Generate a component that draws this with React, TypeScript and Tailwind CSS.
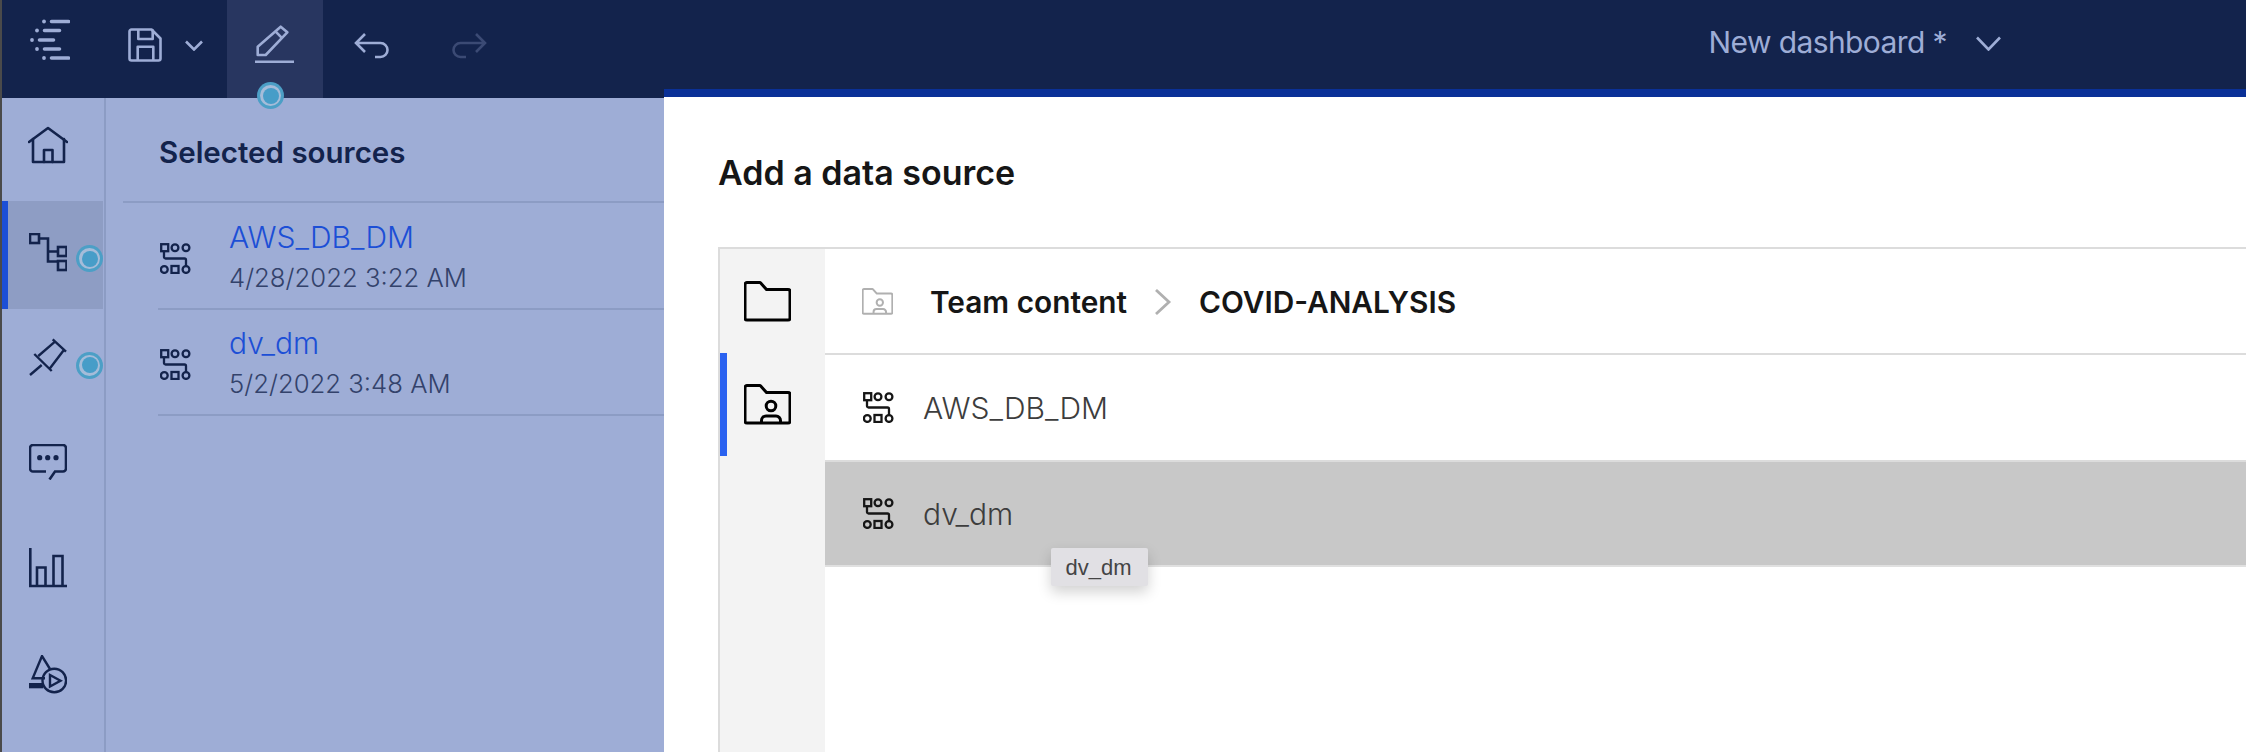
import React from "react";

const font = { fontFamily: '"Inter", "Liberation Sans", sans-serif' };

function DataSourceIcon({ className = "" }: { className?: string }) {
  return (
    <svg width="31" height="31" viewBox="0 0 31 31" fill="none" stroke="currentColor" strokeWidth="2.3" className={className}>
      <rect x="1.2" y="1.2" width="7" height="7" />
      <circle cx="15" cy="4.7" r="3.4" />
      <circle cx="26" cy="4.7" r="3.4" />
      <path d="M4 8V14a1.5 1.5 0 0 0 1.5 1.5H24.5a1.5 1.5 0 0 1 1.5 1.5V23" />
      <circle cx="4.3" cy="26.5" r="3.4" />
      <rect x="11.5" y="23" width="7" height="7" />
      <circle cx="26" cy="26.5" r="3.4" />
    </svg>
  );
}

function FolderIcon({ person = false, size = 47, className = "" }: { person?: boolean; size?: number; className?: string }) {
  return (
    <svg width={size} height={(size * 41) / 47} viewBox="0 0 47 41" fill="none" stroke="currentColor" strokeWidth="3" strokeLinejoin="round" className={className}>
      <path d="M3 1.5H15.5a1.5 1.5 0 0 1 1.2 .5L22.5 8.5H44a2 2 0 0 1 2 2V37a2 2 0 0 1 -2 2H3a2 2 0 0 1 -2-2V3.5a2 2 0 0 1 2-2Z" />
      {person && (
        <>
          <circle cx="27" cy="22" r="4.8" />
          <path d="M17.5 39V36.5a4.5 4.5 0 0 1 4.5-4.5H32a4.5 4.5 0 0 1 4.5 4.5V39" />
        </>
      )}
    </svg>
  );
}

function Chevron({ w, h, className = "" }: { w: number; h: number; className?: string }) {
  return (
    <svg width={w} height={h} viewBox={`0 0 ${w} ${h}`} fill="none" stroke="currentColor" strokeWidth="2.6" className={className}>
      <path d={`M1 1.5L${w / 2} ${h - 1.5}L${w - 1} 1.5`} />
    </svg>
  );
}

function Dot({ className = "" }: { className?: string }) {
  return (
    <span className={`absolute flex h-[27px] w-[27px] items-center justify-center rounded-full bg-[#4c9fc6] ${className}`}>
      <span className="flex h-[21px] w-[21px] items-center justify-center rounded-full bg-[#a5bcd9]">
        <span className="h-[16px] w-[16px] rounded-full bg-[#479dc8]" />
      </span>
    </span>
  );
}

function RailItem({ children, h = "h-[106px]", pb = "pb-[10px]", active = false, dot = false }: { children: React.ReactNode; h?: string; pb?: string; active?: boolean; dot?: boolean }) {
  return (
    <div className={`relative flex w-[101px] items-center justify-center ${h} ${pb} ${active ? "border-l-[6px] border-[#1c4fd6] bg-[#8e9dc4] pr-[15px]" : "pr-[9px]"}`}>
      {children}
      {dot && <Dot className="top-1/2 right-[0px] -translate-y-[10px]" />}
    </div>
  );
}

const ink = "#13234c";

export default function App() {
  return (
    <div className="flex h-[752px] w-[2246px] flex-col overflow-hidden border-l-2 border-[#4a4a4a] bg-white" style={font}>
      <header className="flex h-[98px] shrink-0 items-start bg-[#13234c] text-[#9eadd6]">
        <div className="flex h-[98px] w-[96px] items-start justify-center pt-[19px]">
          <svg width="40" height="41" viewBox="0 0 40 41" fill="none" stroke="currentColor" strokeWidth="3.6" strokeLinecap="round">
            <path d="M21.5 2.5H38.5M14.5 11.5H29.5M9.5 21H23.5M14.5 30H29.5M21.5 39H38.5" />
            <g fill="currentColor" stroke="none">
              <circle cx="14" cy="2.5" r="1.9" />
              <circle cx="7" cy="11.5" r="1.9" />
              <circle cx="2" cy="21" r="1.9" />
              <circle cx="7" cy="30" r="1.9" />
              <circle cx="14" cy="39" r="1.9" />
            </g>
          </svg>
        </div>
        <div className="flex h-[98px] w-[129px] items-start pt-[28px] pl-[30px]">
          <svg width="34" height="34" viewBox="0 0 34 34" fill="none" stroke="currentColor" strokeWidth="2.6" strokeLinejoin="round">
            <path d="M3.5 1.5H23.5L32.5 10.5V30.5a2 2 0 0 1 -2 2H3.5a2 2 0 0 1 -2-2V3.5a2 2 0 0 1 2-2Z" />
            <path d="M10.3 1.5V11H24.7V1.5M9.7 32.5V18.7H25.3V32.5" />
          </svg>
          <Chevron w={18} h={11} className="mt-[12px] ml-[23px]" />
        </div>
        <div className="relative flex h-[98px] w-[96px] items-start justify-center bg-[#283660] pt-[25px]">
          <svg width="40" height="40" viewBox="0 0 40 40" fill="none" stroke="currentColor" strokeWidth="2.6" strokeLinejoin="round">
            <path d="M2.7 30V21.7L25.7 1.7L32.3 7.3L10.7 30Z" />
            <path d="M20.7 6.7L27.3 13.3" />
            <path d="M0 36.8H39" />
          </svg>
          <Dot className="top-[82px] left-[30px] z-10" />
        </div>
        <div className="flex h-[98px] w-[96px] items-start justify-center pt-[30px] pl-[2px]">
          <svg width="37" height="30" viewBox="0 0 37 30" fill="none" stroke="currentColor" strokeWidth="2.6">
            <path d="M11 4L2 13L11 22M2 13H26.5a7 7 0 0 1 0 14H21" />
          </svg>
        </div>
        <div className="flex h-[98px] w-[96px] items-start justify-center pt-[30px] pl-[2px] text-[#3b4a74]">
          <svg width="37" height="30" viewBox="0 0 37 30" fill="none" stroke="currentColor" strokeWidth="2.6">
            <path d="M26 4L35 13L26 22M35 13H10.5a7 7 0 0 0 0 14H16" />
          </svg>
        </div>
        <div className="mr-[245px] ml-auto flex items-center pt-[25px]">
          <span className="text-[30px] leading-[34px] tracking-[-0.6px]">New dashboard *</span>
          <Chevron w={25} h={15} className="mt-[3px] ml-[29px]" />
        </div>
      </header>

      <div className="flex min-h-0 flex-1">
        <aside className="flex w-[662px] shrink-0 bg-[#9eadd6]">
          <nav className="flex w-[104px] shrink-0 flex-col border-r-2 border-[#8c9cc4]" style={{ color: ink }}>
            <RailItem h="h-[103px]">
              <svg width="40" height="38" viewBox="0 0 40 38" fill="none" stroke="currentColor" strokeWidth="2.6" strokeLinejoin="round" strokeLinecap="round">
                <path d="M1 16L20 2L39 16" />
                <path d="M5 13V36H36V13" />
                <path d="M16 36V24H24.5V36" />
              </svg>
            </RailItem>
            <RailItem h="h-[108px]" pb="pb-[6px]" active dot>
              <svg width="38" height="39" viewBox="0 0 38 39" fill="none" stroke="currentColor" strokeWidth="2.6">
                <rect x="1" y="1" width="9" height="9" />
                <path d="M10 5.5H19V28.5H29M19 18.5H29" />
                <rect x="29" y="14" width="8.5" height="9" />
                <rect x="29" y="28" width="8.5" height="9" />
              </svg>
            </RailItem>
            <RailItem h="h-[105px]" dot>
              <svg width="38" height="38" viewBox="0 0 38 38" fill="none" stroke="currentColor" strokeWidth="2.4">
                <path d="M23.7 1.3L37 13.7M5.3 16L22.7 33M9.3 18L26 3.7M34.3 12.7L21 30.3M12.7 27L1 37" />
              </svg>
            </RailItem>
            <RailItem>
              <svg width="38" height="36" viewBox="0 0 38 36" fill="none" stroke="currentColor" strokeWidth="2.6">
                <path d="M17 27.5H4a3 3 0 0 1 -3-3V4a3 3 0 0 1 3-3H34a3 3 0 0 1 3 3V24.5a3 3 0 0 1 -3 3H26L20.5 35.5" />
                <g fill="currentColor" stroke="none">
                  <circle cx="10.7" cy="13.7" r="2.6" />
                  <circle cx="18.7" cy="13.7" r="2.6" />
                  <circle cx="27" cy="13.7" r="2.6" />
                </g>
              </svg>
            </RailItem>
            <RailItem>
              <svg width="38" height="40" viewBox="0 0 38 40" fill="none" stroke="currentColor" strokeWidth="2.6">
                <path d="M1.3 0V38H38M8 38V19.5H16.5V38M24.5 38V8H33.5V38" />
              </svg>
            </RailItem>
            <RailItem>
              <svg width="38" height="39" viewBox="0 0 38 39" fill="none" stroke="currentColor" strokeWidth="2.4">
                <path d="M21 14L13 1L3.7 23.3H16" />
                <rect x="0" y="28" width="14.3" height="5.3" fill="currentColor" stroke="none" />
                <circle cx="25.3" cy="25.5" r="11.8" />
                <path d="M21 20V31.5L31.5 25.7Z" />
              </svg>
            </RailItem>
          </nav>

          <section className="flex min-w-0 flex-1 flex-col">
            <div className="flex h-[103px] items-center pt-[4px] pl-[53px]">
              <h2 className="text-[29.5px] leading-[36px] font-semibold" style={{ color: ink }}>Selected sources</h2>
            </div>
            <div className="ml-[17px] border-t-2 border-[#8c9cc4] pl-[35px]">
              <div className="flex h-[107px] items-center border-b-2 border-[#8c9cc4] pl-[2px]">
                <DataSourceIcon className="mt-[6px] text-[#13234c]" />
                <div className="ml-[38px] flex flex-col pt-[3px]">
                  <span className="text-[30px] leading-[40px] font-light text-[#1c4fd6]">AWS_DB_DM</span>
                  <span className="text-[25.7px] leading-[41px] font-light text-[#33426b]">4/28/2022 3:22 AM</span>
                </div>
              </div>
            </div>
            <div className="ml-[52px] flex h-[106px] items-center border-b-2 border-[#8c9cc4] pl-[2px]">
              <DataSourceIcon className="mt-[4px] text-[#13234c]" />
              <div className="ml-[38px] flex flex-col pt-[3px]">
                <span className="text-[30px] leading-[40px] font-light text-[#1c4fd6]">dv_dm</span>
                <span className="text-[25.7px] leading-[41px] font-light text-[#33426b]">5/2/2022 3:48 AM</span>
              </div>
            </div>
          </section>
        </aside>

        <main className="-mt-[9px] flex min-w-0 flex-1 flex-col border-t-8 border-[#0a3097] bg-white pl-[54px]">
          <div className="flex h-[150px] shrink-0 items-center pt-[2px]">
            <h1 className="text-[34px] leading-[40px] font-semibold text-[#161616]">Add a data source</h1>
          </div>
          <div className="flex min-h-0 flex-1 border-t-2 border-l-2 border-[#dcdcdc]">
            <div className="w-[105px] shrink-0 bg-[#f3f3f3] text-black">
              <div className="flex h-[104px] items-center justify-center pr-[10px]">
                <FolderIcon />
              </div>
              <div className="flex h-[103px] items-center justify-center border-l-[7px] border-[#2a62f0] pr-[17px]">
                <FolderIcon person />
              </div>
            </div>
            <div className="relative min-w-0 flex-1">
              <div className="flex h-[106px] items-center border-b-2 border-[#dcdcdc] pt-[1px] pl-[37px]">
                <FolderIcon person size={31} className="text-[#b0b0b0]" />
                <span className="ml-[37px] text-[29.8px] leading-[36px] font-semibold text-[#161616]">Team content</span>
                <svg width="18" height="26" viewBox="0 0 18 26" fill="none" stroke="#b0b0b0" strokeWidth="2.8" className="ml-[27px]">
                  <path d="M2 1L15 13L2 25" />
                </svg>
                <span className="ml-[27px] text-[29.8px] leading-[36px] font-semibold text-[#161616]">COVID-ANALYSIS</span>
              </div>
              <div className="flex h-[107px] items-center border-b-2 border-[#dcdcdc] pl-[38px] text-[#161616]">
                <DataSourceIcon />
                <span className="ml-[29px] text-[30px] leading-[40px] font-light text-[#3d3d3d]">AWS_DB_DM</span>
              </div>
              <div className="flex h-[105px] items-center border-b-2 border-[#e0e0e0] bg-[#c8c8c8] pl-[38px] text-[#161616]">
                <DataSourceIcon />
                <span className="ml-[29px] text-[30px] leading-[40px] font-light text-[#3d3d3d]">dv_dm</span>
              </div>
              <div className="absolute top-[299px] left-[226px] flex h-[38px] w-[97px] items-center justify-center rounded-[2px] bg-[#e1e0e4] pr-[2px] text-[22px] text-[#444444] shadow-[0_6px_14px_rgba(0,0,0,0.18)]" style={{ fontFamily: '"Liberation Sans", sans-serif' }}>
                dv_dm
              </div>
            </div>
          </div>
        </main>
      </div>
    </div>
  );
}
